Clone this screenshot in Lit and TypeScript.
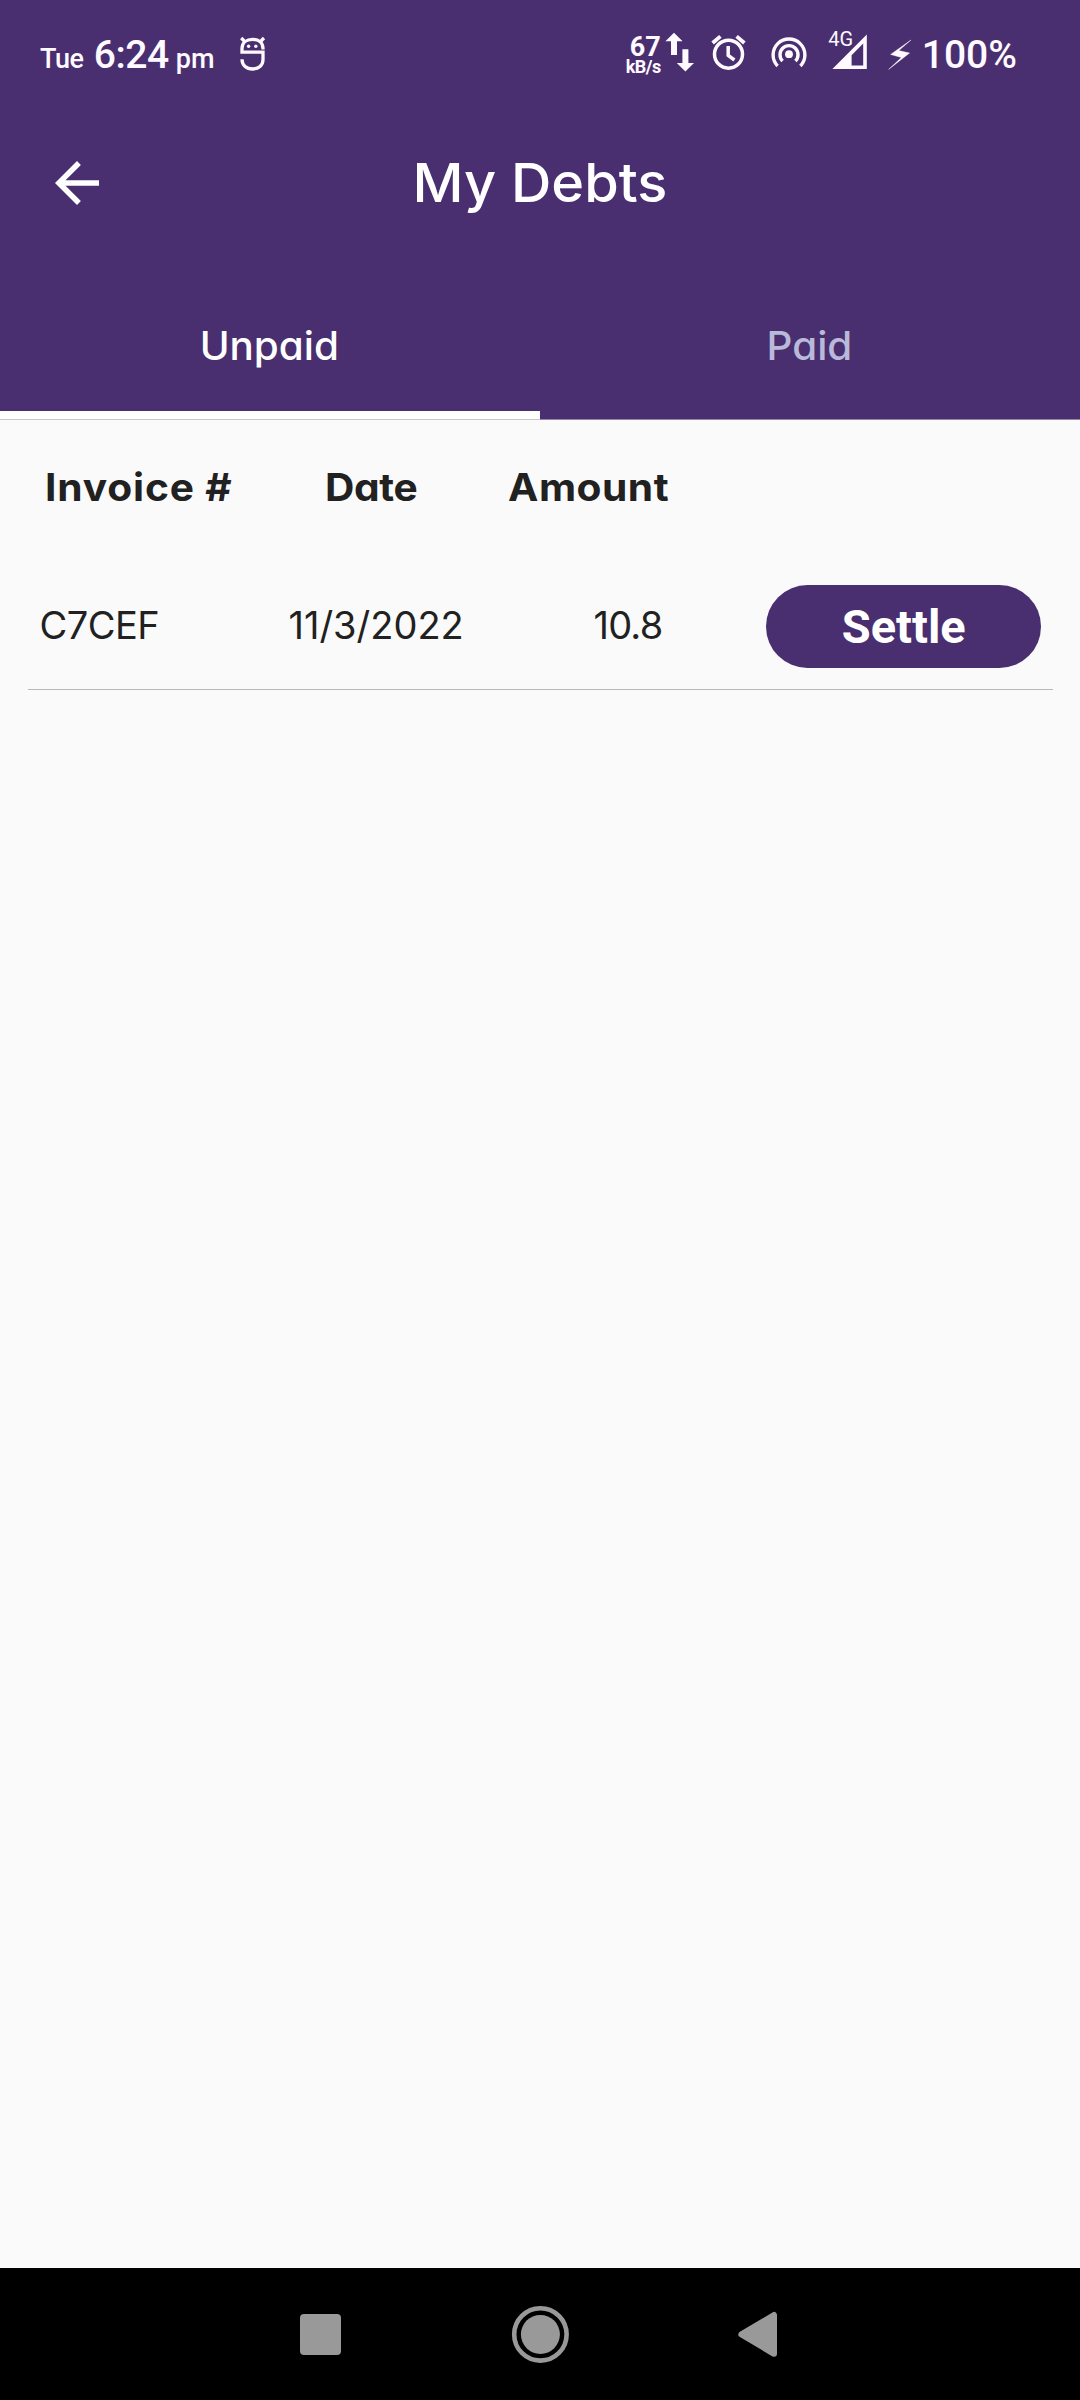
import { LitElement, html, css } from "lit";
import { customElement, state } from "lit/decorators.js";

type Tab = "Unpaid" | "Paid";

interface Debt {
  invoice: string;
  date: string;
  amount: string;
}

@customElement("status-bar")
export class StatusBar extends LitElement {
  static styles = css`
    :host {
      display: block;
      font-family: Roboto, "Liberation Sans", sans-serif;
      font-weight: 500;
      color: #fffaff;
    }
    svg { display: block; flex: none; overflow: visible; }
    .bar {
      display: flex;
      justify-content: space-between;
      height: 110px;
      box-sizing: border-box;
      padding: 0 63px 0 40px;
      white-space: nowrap;
    }
    .clock { display: flex; align-items: flex-start; padding-top: 35px; }
    .text { display: flex; align-items: baseline; line-height: 40px; }
    .small { font-size: 27px; }
    .day { letter-spacing: -0.4px; }
    .time { font-size: 39px; letter-spacing: -0.4px; margin: 0 7px 0 10px; }
    .mint { margin: 1px 0 0 25px; }
    .icons { display: flex; align-items: flex-start; }
    .speed {
      width: 36px;
      padding-top: 36.5px;
      font-weight: 700;
      display: flex;
      flex-direction: column;
      align-items: flex-end;
      gap: 2px;
    }
    .rate { font-size: 27px; line-height: 20px; }
    .unit { font-size: 18px; line-height: 16px; letter-spacing: -0.5px; }
    .updown { margin: 32px 0 0 4px; }
    .alarm { margin: 34px 0 0 16px; }
    .hotspot { margin: 36px 0 0 24px; }
    .signal { position: relative; margin: 30px 0 0 21px; }
    .net {
      position: absolute;
      left: 0.5px;
      top: -1.5px;
      font-size: 20px;
      line-height: 20px;
      font-weight: 450;
    }
    .bolt { margin: 38px 0 0 20px; }
    .percent { font-size: 39px; line-height: 40px; margin: 35px 0 0 10px; }
  `;

  render() {
    return html`
      <div class="bar">
        <div class="clock">
          <div class="text">
            <span class="small day">Tue</span>
            <span class="time">6:24</span>
            <span class="small">pm</span>
          </div>
          <svg class="mint" width="26" height="36" viewBox="240 36 26 36" fill="none" stroke="currentColor" stroke-width="3.3">
            <path d="M263 49.5V48.5C263 42.5 258.5 39.4 252.6 39.4S242 42.5 242 48.5V52.2H263V59.5C263 65.5 258.5 69 252.6 69S242 65.5 242 59.3" />
            <path d="M241.2 38l4 4M264 38l-4 4" stroke-width="3.2" />
            <circle cx="248.6" cy="46.2" r="1.7" fill="currentColor" stroke="none" />
            <circle cx="255.8" cy="46.2" r="1.7" fill="currentColor" stroke="none" />
          </svg>
        </div>
        <div class="icons">
          <div class="speed">
            <span class="rate">67</span>
            <span class="unit">kB/s</span>
          </div>
          <svg class="updown" width="30" height="40" viewBox="665 32 30 40" fill="currentColor">
            <path d="M674 32.8L682.6 41.2H677V55H671V41.2H665.4zM685.4 71.6L676.8 63H682.4V49.2H688.4V63H694z" />
          </svg>
          <svg class="alarm" width="36" height="37" viewBox="711 34 36 37" fill="none" stroke="currentColor" stroke-width="3.5">
            <circle cx="728.5" cy="54.2" r="14" />
            <path d="M712.6 43L720.4 36.4M736.6 36.4L744.4 43" stroke-width="3.8" />
            <path d="M728.2 46V55.4L734.4 60" />
          </svg>
          <svg class="hotspot" width="36" height="32" viewBox="771 36 36 32" fill="none" stroke="currentColor" stroke-width="3.4">
            <path d="M777.6 66A15.9 15.9 0 1 1 800.4 66" />
            <path d="M782.6 61A9 9 0 1 1 795.4 61" />
            <circle cx="789" cy="54.2" r="3.9" fill="currentColor" stroke="none" />
          </svg>
          <div class="signal">
            <svg width="40" height="40" viewBox="828 30 40 40" fill="currentColor">
              <path fill-rule="evenodd" d="M866.8 34.6V69H832.4zM863.2 43.6L851.6 55.2V65.6H863.2z" />
            </svg>
            <span class="net">4G</span>
          </div>
          <svg class="bolt" width="24" height="32" viewBox="888 38 24 32" fill="currentColor">
            <path d="M911 40L890.6 54.4L901.4 57.6L888.6 69.4L909.6 53L898.8 50.6z" stroke="currentColor" stroke-width=".4" />
          </svg>
          <span class="percent">100%</span>
        </div>
      </div>
    `;
  }
}

@customElement("nav-bar")
export class NavBar extends LitElement {
  static styles = css`
    :host { display: block; }
    .bar {
      display: flex;
      align-items: center;
      height: 132px;
      box-sizing: border-box;
      padding-left: 290px;
      background: #000;
      color: #999;
    }
    svg { display: block; }
    .home { margin-left: 160px; }
    .back { margin-left: 157px; }
  `;

  render() {
    return html`
      <div class="bar">
        <svg width="60" height="60" viewBox="0 0 60 60" fill="currentColor">
          <rect x="10" y="10" width="41" height="41" rx="4" />
        </svg>
        <svg class="home" width="60" height="60" viewBox="0 0 60 60" fill="currentColor">
          <circle cx="30.4" cy="30.4" r="19.5" />
          <circle cx="30.4" cy="30.4" r="26.2" fill="none" stroke="currentColor" stroke-width="4.6" />
        </svg>
        <svg class="back" width="60" height="60" viewBox="0 0 60 60" fill="currentColor" stroke="currentColor" stroke-width="6" stroke-linejoin="round">
          <path d="M14.4 30.4L47 11V49.8z" />
        </svg>
      </div>
    `;
  }
}

@customElement("app-root")
export class AppRoot extends LitElement {
  static styles = css`
    :host {
      display: block;
      font-family: Inter, "Open Sans", sans-serif;
      font-feature-settings: "cv11";
      color: #212121;
    }
    .screen {
      display: flex;
      flex-direction: column;
      height: 2400px;
      background: #fafafa;
      white-space: nowrap;
    }
    .top { background: #492f70; color: #fff; }
    .appbar {
      display: grid;
      grid-template-columns: 110px 1fr 110px;
      align-items: center;
      height: 146px;
    }
    .back { display: block; margin-left: 44px; }
    .title {
      margin: 0;
      font-size: 54px;
      line-height: 60px;
      font-weight: 500;
      text-align: center;
      transform: scaleX(1.035);
    }
    .tabs { display: grid; grid-template-columns: 1fr 1fr; }
    .tab {
      height: 163px;
      box-sizing: border-box;
      padding: 65px 1.5px 40px 0;
      border: 0;
      border-bottom: 8px solid transparent;
      background: none;
      font: inherit;
      font-feature-settings: inherit;
      font-size: 39px;
      line-height: 50px;
      font-weight: 500;
      text-align: center;
      color: #b9b9d9;
    }
    .tab.active { border-color: #fff; color: #fff; }
    .label { display: inline-block; transform: scaleX(1.035); }
    .rule { height: 1px; background: linear-gradient(90deg, #cac6ce 50%, #9484a8 50%); }
    .body { flex: 1; font-size: 38px; line-height: 50px; }
    .head {
      display: grid;
      grid-template-columns: 280px 183.5px max-content;
      padding: 42px 0 0 44.5px;
      font-weight: 700;
    }
    .col { transform: scaleX(1.07); transform-origin: left; }
    .col:first-child { letter-spacing: 0.8px; }
    .col:nth-child(2) { letter-spacing: -0.3px; }
    .col:last-child { letter-spacing: 0.5px; }
    .list { margin: 73px 27px 0 28px; }
    .row {
      display: grid;
      grid-template-columns: 249px 305px 172px 275.5px;
      align-items: center;
      padding: 0 0 21px 11.5px;
      border-bottom: 1px solid #b9b9b9;
      font-weight: 370;
    }
    .cell { padding-bottom: 2px; }
    .invoice { letter-spacing: -0.5px; }
    .amount { letter-spacing: -0.8px; }
    .settle {
      height: 82.5px;
      padding: 1px 0 0 1px;
      border: 0;
      border-radius: 42px;
      background: #492f70;
      color: #fff;
      font: 700 47px/50px Roboto, "Liberation Sans", sans-serif;
    }
  `;

  @state() private active: Tab = "Unpaid";

  private readonly tabs: Tab[] = ["Unpaid", "Paid"];
  private readonly columns: string[] = ["Invoice #", "Date", "Amount"];
  private readonly debts: Debt[] = [{ invoice: "C7CEF", date: "11/3/2022", amount: "10.8" }];

  render() {
    return html`
      <div class="screen">
        <header class="top">
          <status-bar></status-bar>
          <div class="appbar">
            <svg class="back" width="66" height="66" viewBox="0 0 24 24" fill="currentColor">
              <path d="M20 11H7.83l5.59-5.59L12 4l-8 8 8 8 1.41-1.41L7.83 13H20v-2z" />
            </svg>
            <h1 class="title">My Debts</h1>
          </div>
          <div class="tabs">
            ${this.tabs.map(
              (t) => html`<button class="tab ${t === this.active ? "active" : ""}" @click=${() => (this.active = t)}><span class="label">${t}</span></button>`
            )}
          </div>
        </header>
        <div class="rule"></div>
        <main class="body">
          <div class="head">${this.columns.map((c) => html`<span class="col">${c}</span>`)}</div>
          <div class="list">
            ${this.debts.map(
              (d) => html`
                <div class="row">
                  <span class="cell invoice">${d.invoice}</span>
                  <span class="cell">${d.date}</span>
                  <span class="cell amount">${d.amount}</span>
                  <button class="settle">Settle</button>
                </div>
              `
            )}
          </div>
        </main>
        <nav-bar></nav-bar>
      </div>
    `;
  }
}
